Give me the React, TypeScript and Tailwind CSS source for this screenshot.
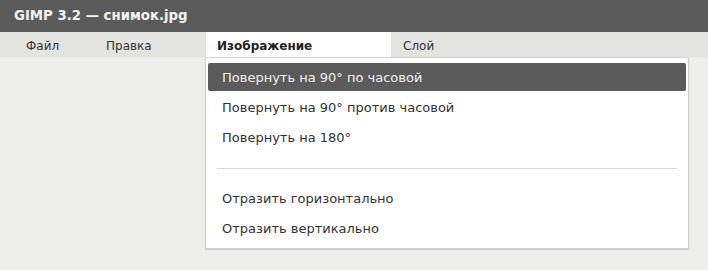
const menus = [
  { label: "Файл", w: "w-[80px]" },
  { label: "Правка", w: "w-[112px]" },
  { label: "Изображение", w: "w-[185px]", active: true },
  { label: "Слой", w: "w-[120px]" },
];

const groups = [
  ["Повернуть на 90° по часовой", "Повернуть на 90° против часовой", "Повернуть на 180°"],
  ["Отразить горизонтально", "Отразить вертикально"],
];

export default function App() {
  return (
    <div
      className="w-[708px] h-[270px] bg-[#edeee9] text-[13px] text-[#333333] overflow-hidden"
      style={{ fontFamily: '"DejaVu Sans", "Noto Sans", sans-serif' }}
    >
      <div className="h-8 bg-[#5b5b5b] flex items-center pl-[14px] font-bold text-[13.3px] text-[#f2f2f2]">
        GIMP 3.2 — снимок.jpg
      </div>
      <div className="h-[25px] bg-[#e3e4df] flex pl-[14px] text-[12px]">
        {menus.map((m) => (
          <div
            key={m.label}
            className={`${m.w} h-full flex items-center pt-[2px] ${
              m.active ? "bg-white font-bold text-[#222222] pl-[11px]" : "px-3"
            }`}
          >
            {m.label}
          </div>
        ))}
      </div>
      <div className="ml-[205px] w-[484px] bg-white border border-[#cfd0cc] shadow-[0_1px_1px_rgba(0,0,0,0.12)] pt-[5px] pb-1 px-[2px]">
        {groups.map((g, gi) => (
          <div key={gi}>
            {gi > 0 && <div className="mx-[9px] mt-[15px] mb-[15px] h-px bg-[#d9d9d6]" />}
            {g.map((item, i) => {
              const hi = gi === 0 && i === 0;
              return (
                <div key={item} className="h-[30px] pb-[2px]">
                  <div
                    className={`h-full flex items-center pl-[14px] pt-[2px] rounded-[2px] ${
                      hi ? "bg-[#5b5b5b] text-[#f2f2f2]" : ""
                    }`}
                  >
                    {item}
                  </div>
                </div>
              );
            })}
          </div>
        ))}
      </div>
    </div>
  );
}
